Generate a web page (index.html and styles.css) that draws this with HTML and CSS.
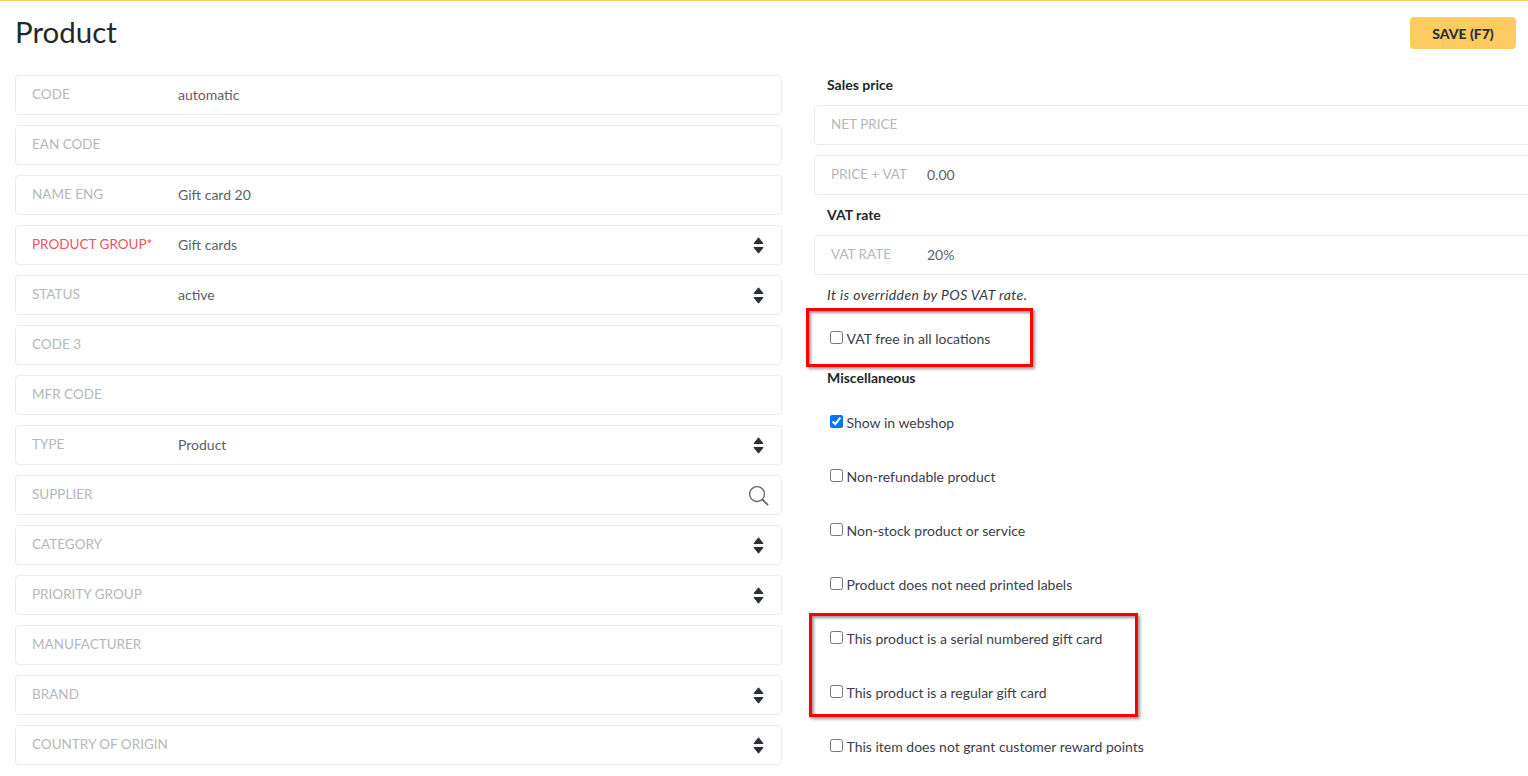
FILE: index.html
```html
<!DOCTYPE html>
<html lang="en">
<head>
<meta charset="UTF-8" />
<title>Product</title>
<link rel="stylesheet" href="styles.css">
</head>
<body>

<!-- Header -->
<header class="page-head">
  <h1>Product</h1>
  <button class="save-btn">SAVE (F7)</button>
</header>

<div class="columns">
  <!-- Left column -->
  <section class="col-left">
    <div class="field"><span class="label">CODE</span><span class="value">automatic</span></div>
    <div class="field"><span class="label">EAN CODE</span></div>
    <div class="field"><span class="label">NAME ENG</span><span class="value">Gift card 20</span></div>
    <div class="field"><span class="label required">PRODUCT GROUP*</span><span class="value">Gift cards</span><svg class="updown" viewBox="0 0 11 17"><path d="M5.500 .8 10 6.500H1zM1 10.500h9l-4.500 5.700z"/></svg></div>
    <div class="field"><span class="label">STATUS</span><span class="value">active</span><svg class="updown" viewBox="0 0 11 17"><path d="M5.500 .8 10 6.500H1zM1 10.500h9l-4.500 5.700z"/></svg></div>
    <div class="field"><span class="label">CODE 3</span></div>
    <div class="field"><span class="label">MFR CODE</span></div>
    <div class="field"><span class="label">TYPE</span><span class="value">Product</span><svg class="updown" viewBox="0 0 11 17"><path d="M5.500 .8 10 6.500H1zM1 10.500h9l-4.500 5.700z"/></svg></div>
    <div class="field"><span class="label">SUPPLIER</span><svg class="search" viewBox="0 0 22 22" fill="none" stroke="#5b6670"><circle cx="9.500" cy="9.500" r="7.800" stroke-width="1.400"/><path d="M15 15l6 6" stroke-width="1.800"/></svg></div>
    <div class="field"><span class="label">CATEGORY</span><svg class="updown" viewBox="0 0 11 17"><path d="M5.500 .8 10 6.500H1zM1 10.500h9l-4.500 5.700z"/></svg></div>
    <div class="field"><span class="label">PRIORITY GROUP</span><svg class="updown" viewBox="0 0 11 17"><path d="M5.500 .8 10 6.500H1zM1 10.500h9l-4.500 5.700z"/></svg></div>
    <div class="field"><span class="label">MANUFACTURER</span></div>
    <div class="field"><span class="label">BRAND</span><svg class="updown" viewBox="0 0 11 17"><path d="M5.500 .8 10 6.500H1zM1 10.500h9l-4.500 5.700z"/></svg></div>
    <div class="field"><span class="label">COUNTRY OF ORIGIN</span><svg class="updown" viewBox="0 0 11 17"><path d="M5.500 .8 10 6.500H1zM1 10.500h9l-4.500 5.700z"/></svg></div>
  </section>

  <!-- Right column -->
  <section class="col-right">
    <h3>Sales price</h3>
    <div class="field"><span class="label short">NET PRICE</span></div>
    <div class="field"><span class="label short">PRICE + VAT</span><span class="value">0.00</span></div>
    <h3>VAT rate</h3>
    <div class="field"><span class="label short">VAT RATE</span><span class="value">20%</span></div>
    <p class="note">It is overridden by POS VAT rate.</p>
    <label class="check"><input type="checkbox">VAT free in all locations</label>
    <h3 class="misc">Miscellaneous</h3>
    <label class="check"><input type="checkbox" checked>Show in webshop</label>
    <label class="check"><input type="checkbox">Non-refundable product</label>
    <label class="check"><input type="checkbox">Non-stock product or service</label>
    <label class="check"><input type="checkbox">Product does not need printed labels</label>
    <label class="check"><input type="checkbox">This product is a serial numbered gift card</label>
    <label class="check"><input type="checkbox">This product is a regular gift card</label>
    <label class="check"><input type="checkbox">This item does not grant customer reward points</label>
  </section>
</div>

<!-- Red annotation boxes -->
<div class="mark mark-vat"></div>
<div class="mark mark-gift"></div>

</body>
</html>
```

FILE: styles.css
```css
/* Reset */
* {
  margin: 0; padding: 0; box-sizing: border-box;
}
html, body {
  height: 100%;
  overflow: hidden;
}
body {
  position: relative;
  font-family: Lato, "Open Sans", sans-serif;
  font-size: 14px;
  color: #333b44;
  background: #fff;
  border-top: 1px solid #fdcb62;
}

/* Header */
.page-head {
  display: flex;
  justify-content: space-between;
  align-items: flex-start;
  height: 74px;
  padding: 16px 12px 0 15px;
}
.page-head h1 {
  font-size: 29.500px;
  font-weight: 400;
  line-height: 29px;
  color: #23282d;
}
.save-btn {
  width: 106px;
  height: 32px;
  background: #fdcb62;
  border: none;
  border-radius: 4px;
  font-family: inherit;
  font-size: 14px;
  font-weight: 900;
  color: #2b3036;
}

/* Columns */
.columns {
  display: flex;
  gap: 32px;
  padding-left: 15px;
}
.col-left {
  flex: 0 0 767px;
}
.col-right {
  flex: 0 0 800px;
}

/* Fields */
.field {
  display: flex;
  align-items: center;
  height: 40px;
  margin-bottom: 10px;
  padding: 0 17px 0 16px;
  border: 1px solid #ececec;
  border-radius: 4px;
}
.label {
  flex: 0 0 146px;
  font-size: 13.500px;
  color: #b4b8bc;
  position: relative;
  top: -1px;
}
.label.short {
  flex-basis: 96px;
}
.label.required {
  color: #f8525f;
}
.value {
  flex: 1;
  font-size: 14px;
  color: #5d6166;
  position: relative;
  top: -1px;
}
.col-left .field > svg {
  margin-left: auto;
}
.updown {
  width: 11px;
  height: 17px;
  fill: #2b3036;
  stroke: #2b3036;
  stroke-linejoin: round;
}
.search {
  width: 21px;
  height: 21px;
  margin-right: -5px;
}

/* Right column text */
.col-right h3 {
  height: 20px;
  margin-bottom: 10px;
  padding-left: 13px;
  font-size: 14px;
  font-weight: 700;
  line-height: 19px;
  color: #23282d;
}
.col-right h3.misc {
  margin: 2px 0 8px;
}
.note {
  height: 20px;
  margin-bottom: 7px;
  padding-left: 13px;
  font-size: 14px;
  font-style: italic;
  line-height: 19px;
  letter-spacing: 0.4px;
}

/* Checkboxes */
.check {
  display: flex;
  align-items: center;
  height: 54px;
  padding: 0 0 2px 16px;
  font-size: 14px;
  color: #3a4149;
}
.check input {
  width: 13px;
  height: 13px;
  margin: -1px 3.500px 0 0;
}

/* Red annotations */
.mark {
  position: absolute;
  border: 3px solid #f00;
  box-shadow: 2px 2px 3px rgba(0, 0, 0, 0.4), inset 2px 2px 3px rgba(0, 0, 0, 0.4);
}
.mark-vat {
  left: 806px; top: 307px;
  width: 227px; height: 59px;
}
.mark-gift {
  left: 809px; top: 612px;
  width: 329px; height: 104px;
}
```
